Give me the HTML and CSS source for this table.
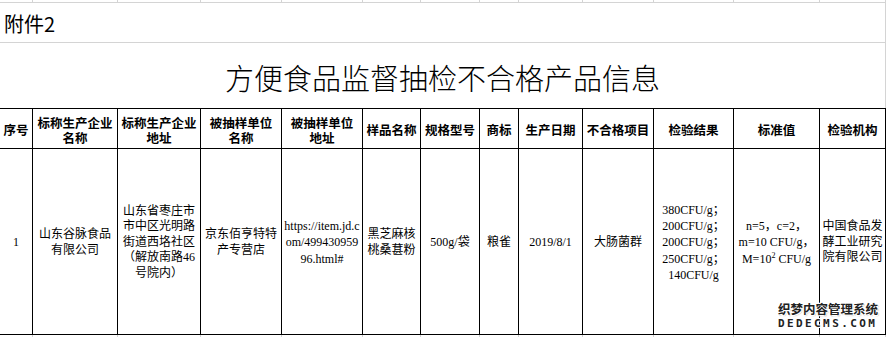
FILE: index.html
```html
<!DOCTYPE html>
<html lang="zh-CN">
<head>
<meta charset="utf-8">
<title>方便食品监督抽检不合格产品信息</title>
<link rel="stylesheet" href="styles.css">
</head>
<body>
<div class="sheet">
  <div class="grid">
    <div class="gcell"></div><div class="gcell"></div><div class="gcell"></div><div class="gcell"></div><div class="gcell"></div><div class="gcell"></div><div class="gcell"></div><div class="gcell"></div><div class="gcell"></div><div class="gcell"></div><div class="gcell"></div><div class="gcell"></div><div class="gcell"></div>

    <div class="fujian"><span>附件2</span></div>
    <div class="title"><span>方便食品监督抽检不合格产品信息</span></div>

    <div class="th"><span>序号</span></div>
    <div class="th"><span>标称生产企业<br>名称</span></div>
    <div class="th"><span>标称生产企业<br>地址</span></div>
    <div class="th"><span>被抽样单位<br>名称</span></div>
    <div class="th"><span>被抽样单位<br>地址</span></div>
    <div class="th"><span>样品名称</span></div>
    <div class="th"><span>规格型号</span></div>
    <div class="th"><span>商标</span></div>
    <div class="th"><span>生产日期</span></div>
    <div class="th"><span>不合格项目</span></div>
    <div class="th"><span>检验结果</span></div>
    <div class="th"><span>标准值</span></div>
    <div class="th"><span>检验机构</span></div>

    <div class="td"><span>1</span></div>
    <div class="td lh15"><span>山东谷脉食品<br>有限公司</span></div>
    <div class="td lh15"><span>山东省枣庄市<br>市中区光明路<br>街道西垎社区<br>（解放南路46<br>号院内）</span></div>
    <div class="td lh15"><span>京东佰亨特特<br>产专营店</span></div>
    <div class="td lh16"><span>https://item.jd.c<br>om/499430959<br>96.html#</span></div>
    <div class="td lh15"><span>黑芝麻核<br>桃桑葚粉</span></div>
    <div class="td"><span>500g/袋</span></div>
    <div class="td"><span>粮雀</span></div>
    <div class="td"><span>2019/8/1</span></div>
    <div class="td"><span>大肠菌群</span></div>
    <div class="td lh16"><span>380CFU/g；<br>200CFU/g；<br>200CFU/g；<br>250CFU/g；<br>140CFU/g</span></div>
    <div class="td lh16"><span>n=5，c=2，<br>m=10 CFU/g，<br>M=10<sup>2</sup> CFU/g</span></div>
    <div class="td lh15"><span>中国食品发<br>酵工业研究<br>院有限公司</span></div>

    <div class="gcell"></div><div class="gcell"></div><div class="gcell"></div><div class="gcell"></div><div class="gcell"></div><div class="gcell"></div><div class="gcell"></div><div class="gcell"></div><div class="gcell"></div><div class="gcell"></div><div class="gcell"></div><div class="gcell"></div><div class="gcell"></div>
  </div>
  <div class="watermark">
    <div class="wm-cn">织梦内容管理系统</div>
    <div class="wm-en">DEDECMS.COM</div>
  </div>
</div>
</body>
</html>
```
FILE: styles.css
```css
* {
  box-sizing: border-box;
  margin: 0;
  padding: 0;
}

html, body {
  background: #ffffff;
}

body {
  margin: 0;
  width: 889px;
  height: 337px;
  overflow: hidden;
  font-family: "Liberation Serif", "Noto Sans CJK SC", serif;
  color: #000;
}

.sheet {
  position: relative;
  width: 889px;
  height: 337px;
}

.grid {
  display: grid;
  grid-template-columns: 33px 85px 83px 81px 81px 58px 59px 39px 64px 71px 80px 86px 66px;
  grid-template-rows: 3px 40px 65px 41px 186px 3px;
  width: 886px;
}

.gcell {
  border-right: 1px solid #d4d4d4;
  border-bottom: 1px solid #d4d4d4;
}

.fujian {
  grid-column: 1 / -1;
  border-right: 1px solid #d4d4d4;
  border-bottom: 1px solid #d4d4d4;
  display: flex;
  align-items: center;
  padding: 3px 0 0 4px;
  font-family: "Noto Sans CJK SC", sans-serif;
  font-size: 20px;
  line-height: 1;
}

.title {
  grid-column: 1 / -1;
  border-right: 1px solid #d4d4d4;
  display: flex;
  align-items: center;
  justify-content: center;
  padding-top: 3px;
  font-family: "Noto Sans CJK SC", sans-serif;
  font-weight: 300;
  font-size: 29px;
  line-height: 1;
}

.th {
  border-top: 1px solid #000;
  border-right: 1px solid #000;
  border-bottom: 1px solid #000;
  display: flex;
  align-items: center;
  justify-content: center;
  text-align: center;
  font-family: "Noto Sans CJK SC", sans-serif;
  font-weight: 700;
  font-size: 12.5px;
  line-height: 15px;
  padding-top: 2px;
  white-space: nowrap;
}

.td {
  border-right: 1px solid #000;
  border-bottom: 1px solid #000;
  display: flex;
  align-items: center;
  justify-content: center;
  text-align: center;
  font-size: 12px;
  line-height: 15px;
  padding-top: 2px;
  white-space: nowrap;
}

.lh15 {
  line-height: 15.5px;
}

.lh16 {
  line-height: 16.2px;
}

sup {
  font-size: 8px;
  line-height: 0;
  vertical-align: 5px;
}

.watermark {
  position: absolute;
  left: 778px;
  top: 301px;
  width: 102px;
  text-align: left;
}

.wm-cn {
  font-family: "Noto Sans CJK SC", sans-serif;
  font-weight: 700;
  font-size: 12.5px;
  line-height: 15px;
  letter-spacing: 0;
  color: #222;
  text-shadow: 1px 1px 0 #fff, -1px -1px 0 #fff, 1px -1px 0 #fff, -1px 1px 0 #fff, 1px 1px 1px #888;
}

.wm-en {
  margin-top: 3px;
  font-family: "DejaVu Sans Mono", monospace;
  font-weight: 700;
  font-size: 11px;
  line-height: 9px;
  letter-spacing: 2.4px;
  color: #222;
  text-shadow: 1px 1px 0 #fff, -1px -1px 0 #fff, 1px -1px 0 #fff, -1px 1px 0 #fff;
}
```
